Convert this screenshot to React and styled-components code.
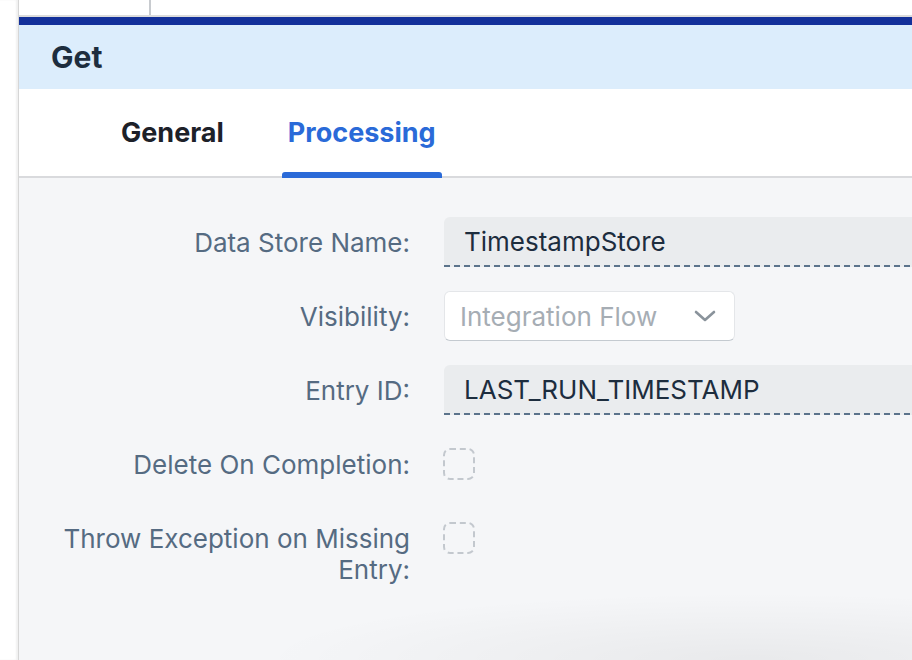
import React from "react";
import styled, { createGlobalStyle } from "styled-components";

const Global = createGlobalStyle`
  html, body {
    margin: 0;
    padding: 0;
    background: #ffffff;
    font-family: Inter, "Noto Sans", sans-serif;
  }
  #root {
    height: 660px;
    overflow: hidden;
  }
`;

const Page = styled.div`
  display: flex;
  height: 660px;
  overflow: hidden;
`;

const Gutter = styled.div`
  width: 18px;
  flex: none;
  background: #ffffff;
  border-right: 1px solid #d6d6d6;
  box-shadow: inset -2px 0 2px rgba(0, 0, 0, 0.06);
`;

const Panel = styled.div`
  flex: 1;
  display: flex;
  flex-direction: column;
  min-width: 0;
  box-shadow: inset 3px 0 3px -1px rgba(0, 0, 0, 0.08);
`;

const TopStrip = styled.div`
  height: 15px;
  display: flex;
  background: #ffffff;
  border-bottom: 2px solid #dcdcdc;
`;

const TopCell = styled.div`
  width: 130px;
  border-right: 2px solid #c8cbcf;
`;

const AccentBar = styled.div`
  height: 8px;
  background: #13309a;
`;

const Header = styled.div`
  height: 64px;
  display: flex;
  align-items: center;
  padding-left: 32px;
  background: #dcedfc;
  color: #1d2d3e;
  font-size: 30px;
  font-weight: 700;
`;

const TabBar = styled.div`
  height: 87px;
  display: flex;
  align-items: stretch;
  gap: 52px;
  padding-left: 96px;
  background: #ffffff;
  border-bottom: 2px solid #d9dadd;
`;

const Tab = styled.div`
  position: relative;
  display: flex;
  align-items: center;
  padding: 0 6px;
  font-size: 27px;
  font-weight: 700;
  color: ${(p) => (p.$active ? "#2a6ad8" : "#1d2129")};

  &::after {
    content: "";
    display: ${(p) => (p.$active ? "block" : "none")};
    position: absolute;
    left: 0;
    right: 0;
    bottom: -2px;
    height: 6px;
    border-radius: 3px 3px 0 0;
    background: #2a6ad8;
  }
`;

const Form = styled.div`
  flex: 1;
  display: grid;
  grid-template-columns: 351px 1fr;
  grid-auto-rows: 50px;
  column-gap: 34px;
  row-gap: 24px;
  align-content: start;
  padding: 39px 0 0 40px;
  background:
    radial-gradient(ellipse 55% 14% at 82% 100%, rgba(0, 0, 0, 0.05), transparent),
    #f5f6f8;
`;

const Label = styled.div`
  align-self: ${(p) => (p.$multi ? "start" : "center")};
  padding-top: ${(p) => (p.$multi ? "10px" : "0")};
  text-align: right;
  font-size: 26px;
  line-height: 31px;
  color: #556b82;
`;

const Input = styled.div`
  display: flex;
  align-items: center;
  height: 50px;
  box-sizing: border-box;
  padding: 0 0 2px 20px;
  margin-right: -40px;
  border-radius: 6px 6px 0 0;
  background:
    repeating-linear-gradient(to right, #5b738b 0 6px, transparent 6px 10px) bottom left / 100% 2px no-repeat,
    #eaecee;
  font-size: 26px;
  color: #1d2d3e;
  white-space: nowrap;
`;

const Select = styled.div`
  width: 291px;
  box-sizing: border-box;
  display: flex;
  align-items: center;
  justify-content: space-between;
  padding: 0 18px 0 15px;
  background: #ffffff;
  border: 1px solid #e4e6e9;
  border-bottom-color: #c4cad0;
  border-radius: 6px;
  font-size: 26px;
  color: #a6adb4;
`;

const CheckCell = styled.div`
  display: flex;
  align-items: center;
`;

const Checkbox = styled.div`
  width: 32px;
  height: 32px;
  box-sizing: border-box;
  margin-left: -1px;
  border: 2px dashed #c3c8ce;
  border-radius: 7px;
`;

const Chevron = () => (
  <svg width="22" height="14" viewBox="0 0 22 14" fill="none">
    <path d="M2 3 L11 11 L20 3" stroke="#8a939b" strokeWidth="2.6" strokeLinecap="round" strokeLinejoin="round" />
  </svg>
);

export default function App() {
  return (
    <Page>
      <Global />
      <Gutter />
      <Panel>
        <TopStrip>
          <TopCell />
        </TopStrip>
        <AccentBar />
        <Header>Get</Header>
        <TabBar>
          <Tab>General</Tab>
          <Tab $active>Processing</Tab>
        </TabBar>
        <Form>
          <Label>Data Store Name:</Label>
          <Input>TimestampStore</Input>

          <Label>Visibility:</Label>
          <Select>
            <span>Integration Flow</span>
            <Chevron />
          </Select>

          <Label>Entry ID:</Label>
          <Input>LAST_RUN_TIMESTAMP</Input>

          <Label>Delete On Completion:</Label>
          <CheckCell>
            <Checkbox />
          </CheckCell>

          <Label $multi>Throw Exception on Missing Entry:</Label>
          <CheckCell>
            <Checkbox />
          </CheckCell>
        </Form>
      </Panel>
    </Page>
  );
}
